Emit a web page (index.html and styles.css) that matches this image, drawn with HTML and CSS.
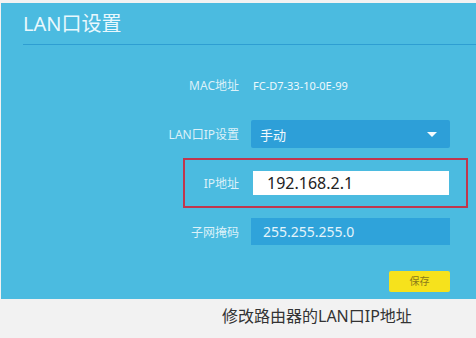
FILE: index.html
```html
<!DOCTYPE html>
<html lang="zh-CN">
<head>
  <meta charset="UTF-8">
  <title>LAN口设置</title>
  <link rel="stylesheet" href="styles.css">
</head>
<body>
  <div class="panel">
    <div class="title">LAN口设置</div>
    <div class="divider"></div>

    <div class="form">
      <div class="row mac">
        <div class="label">MAC地址</div>
        <div class="value">FC-D7-33-10-0E-99</div>
      </div>

      <div class="row mode">
        <div class="label">LAN口IP设置</div>
        <div class="field select">
          <span>手动</span>
          <span class="arrow"></span>
        </div>
      </div>

      <div class="row highlight">
        <div class="label">IP地址</div>
        <div class="field input">192.168.2.1</div>
      </div>

      <div class="row mask">
        <div class="label">子网掩码</div>
        <div class="field dark">255.255.255.0</div>
      </div>

      <div class="actions">
        <div class="save">保存</div>
      </div>
    </div>
  </div>

  <div class="caption">修改路由器的LAN口IP地址</div>
</body>
</html>
```

FILE: styles.css
```css
* {
  box-sizing: border-box;
  margin: 0;
  padding: 0;
}

body {
  font-family: "Noto Sans", "Noto Sans CJK SC", sans-serif;
  background-color: #f2f2f2;
  padding: 3px 0 0 1px;
  width: 476px;
  height: 338px;
  overflow: hidden;
}

.panel {
  background: #4bbbe0;
  height: 296px;
  padding-top: 8px;
}

.title {
  color: #e9f8fd;
  font-size: 20px;
  line-height: 26px;
  padding-left: 22px;
}

.divider {
  height: 1px;
  background: #2e9ed2;
  margin: 7px 0 0 22px;
}

.form {
  padding-top: 26px;
}

.row {
  display: flex;
  align-items: center;
  height: 28px;
}

.label {
  width: 238px;
  text-align: right;
  color: #dcf1f9;
  font-size: 12px;
}

.value {
  margin-left: 14px;
  color: #eef9fd;
  font-size: 11px;
}

.field {
  margin-left: 12px;
  width: 199px;
  height: 28px;
  display: flex;
  align-items: center;
  padding-left: 9px;
}

.select {
  background: #2d9fd8;
  color: #f2fafd;
  font-size: 13px;
  justify-content: space-between;
  padding-right: 13px;
  border-radius: 2px;
}

.arrow {
  width: 0;
  height: 0;
  border-left: 5px solid transparent;
  border-right: 5px solid transparent;
  border-top: 5px solid #f4fbfe;
}

.mode {
  margin-top: 21px;
}

.highlight {
  margin: 10px 0 0 182px;
  width: 285px;
  height: 50px;
  border: 2px solid #c0364d;
}

.highlight .label {
  width: 54px;
}

.highlight .field {
  margin-left: 14px;
  width: 196px;
  height: 24px;
  background: #ffffff;
  color: #222;
  font-size: 16px;
  padding-left: 14px;
}

.mask {
  margin-top: 10px;
  height: 27px;
}

.dark {
  height: 27px;
  background: #2fa3da;
  color: #e3f4fb;
  font-size: 14px;
  padding-left: 12px;
}

.actions {
  display: flex;
  justify-content: flex-end;
  padding-right: 26px;
  margin-top: 26px;
}

.save {
  width: 61px;
  height: 21px;
  background: #f6e21c;
  border-radius: 2px;
  color: #8a7a1a;
  font-size: 10px;
  line-height: 21px;
  text-align: center;
}

.caption {
  padding: 5px 0 0 221px;
  font-size: 16px;
  line-height: 24px;
  color: #333;
}
```
